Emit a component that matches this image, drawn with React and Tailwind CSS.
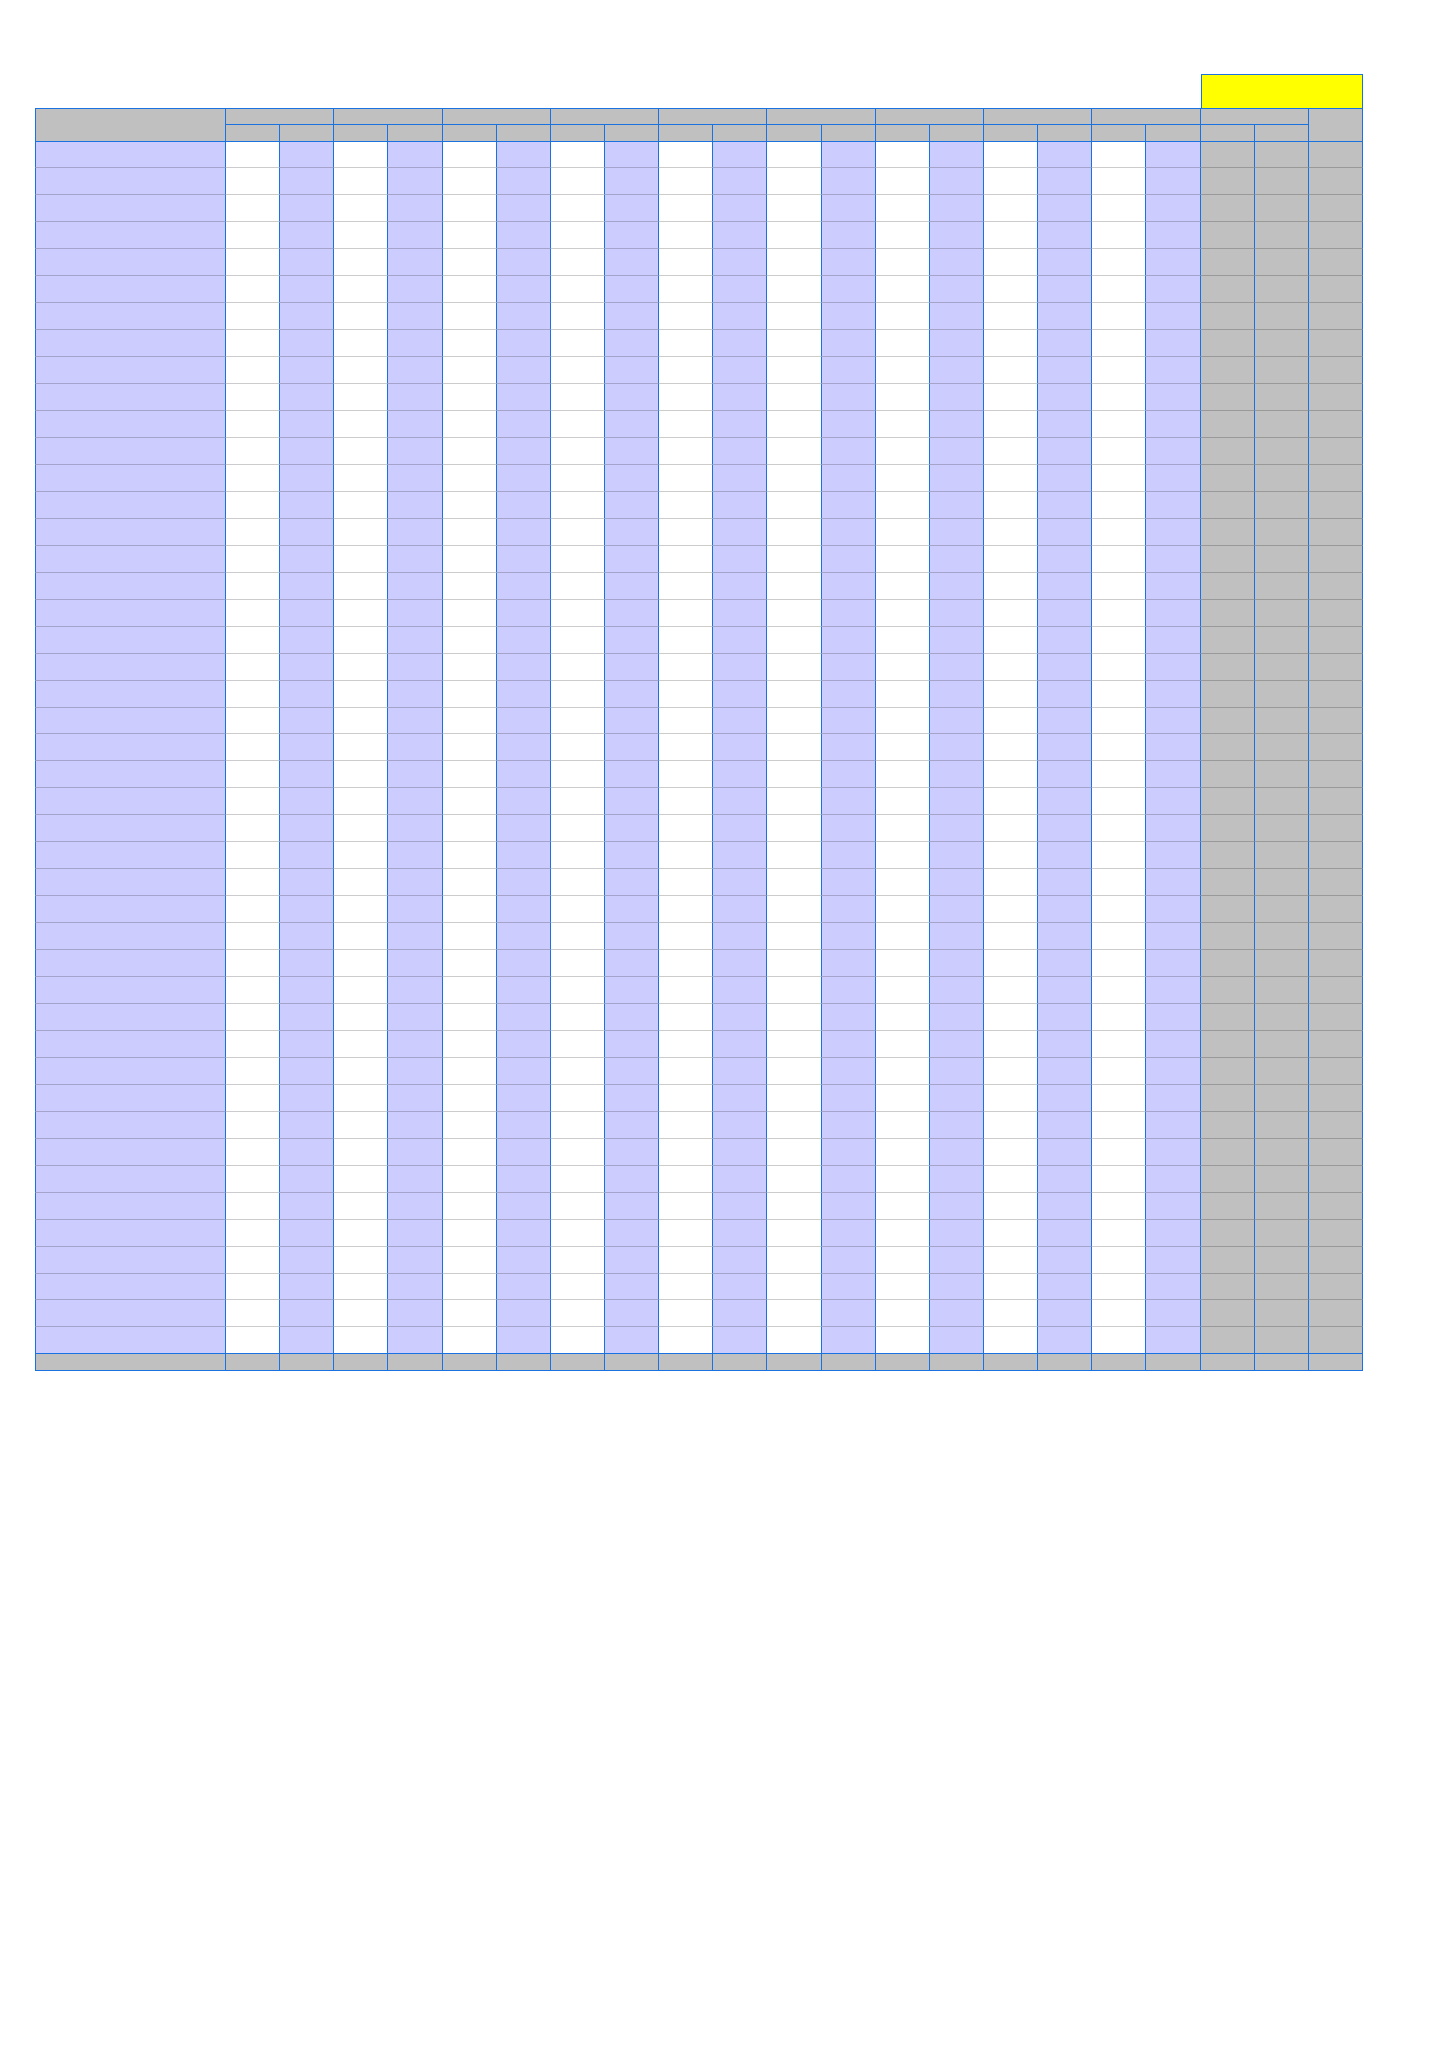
import React from 'react';

// 9 groups of white/lavender pairs, then a gray pair, then a gray total column
const GROUPS = 10;
const ROWS = 45;
const COLS = 'grid w-[1328px] grid-cols-[191px_repeat(21,minmax(0,1fr))]';

function Cell({ className = '' }) {
  return <div className={`border-r border-[#1a72e0] ${className}`} />;
}

export default function App() {
  const rows = Array.from({ length: ROWS }, (_, i) => i);
  const subCols = Array.from({ length: GROUPS * 2 }, (_, i) => i);

  return (
    <div className="min-h-[2059px] w-[1455px] bg-white pl-[35px] pt-[74px]">
      {/* yellow box above the last three columns */}
      <div className={`${COLS} h-[34px]`}>
        <div className="col-start-20 col-span-3 border border-b-0 border-[#1a72e0] bg-[#ffff00]" />
      </div>

      {/* header */}
      <div className={`${COLS} grid-rows-[16.5px_17px]`}>
        <div className="col-start-1 row-start-1 row-span-2 border-l border-t border-b border-r border-[#1a72e0] bg-[#c0c0c0]" />
        {Array.from({ length: GROUPS }, (_, g) => (
          <div
            key={'g' + g}
            className="row-start-1 col-span-2 border-t border-b border-r border-[#1a72e0] bg-[#c0c0c0]"
            style={{ gridColumnStart: 2 + g * 2 }}
          />
        ))}
        <div className="col-start-22 row-start-1 row-span-2 border-t border-b border-r border-[#1a72e0] bg-[#c0c0c0]" />
        {subCols.map((c) => (
          <div
            key={'s' + c}
            className="row-start-2 border-b border-r border-[#1a72e0] bg-[#c0c0c0]"
            style={{ gridColumnStart: 2 + c }}
          />
        ))}
      </div>

      {/* data rows */}
      {rows.map((r) => {
        const last = r === ROWS - 1;
        const bottom = last ? 'border-b border-b-[#1a72e0]' : 'border-b border-b-black/20';
        return (
          <div key={'r' + r} className={`${COLS} h-[26.96px]`}>
            <Cell className={`border-l border-l-[#1a72e0] bg-[#ccccff] ${bottom}`} />
            {subCols.map((c) => {
              const bg = c >= 18 ? 'bg-[#c0c0c0]' : c % 2 === 0 ? 'bg-white' : 'bg-[#ccccff]';
              return <Cell key={c} className={`${bg} ${bottom}`} />;
            })}
            <Cell className={`bg-[#c0c0c0] ${bottom}`} />
          </div>
        );
      })}

      {/* footer */}
      <div className={`${COLS} h-[16.6px]`}>
        <Cell className="border-l border-l-[#1a72e0] border-b border-b-[#1a72e0] bg-[#c0c0c0]" />
        {subCols.map((c) => (
          <Cell key={'f' + c} className="border-b border-b-[#1a72e0] bg-[#c0c0c0]" />
        ))}
        <Cell className="border-b border-b-[#1a72e0] bg-[#c0c0c0]" />
      </div>
    </div>
  );
}
